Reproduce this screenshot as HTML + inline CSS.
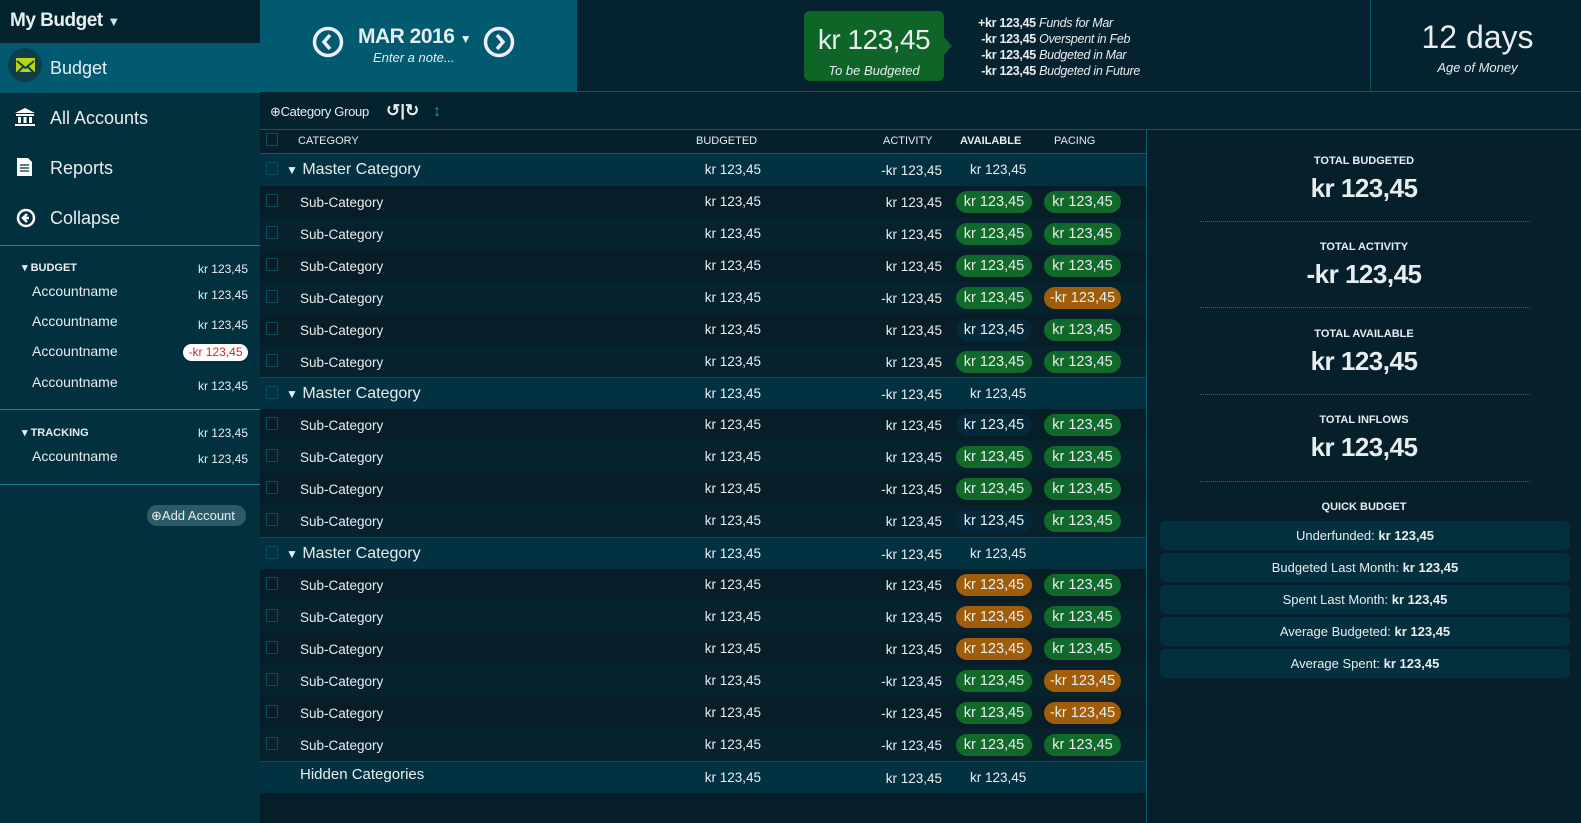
<!DOCTYPE html>
<html><head><meta charset="utf-8"><style>
*{box-sizing:border-box;margin:0;padding:0}
body{width:1581px;height:823px;overflow:hidden;background:#06202b;font-family:"Liberation Sans",sans-serif;color:#e8eef0;position:relative}
.abs{position:absolute}
#side{left:0;top:0;width:260px;height:823px;background:#02303f}
#side .top{height:43px;background:#02222d;font-weight:bold;font-size:19px;padding:10px 10px;letter-spacing:-0.5px}
.nav{height:50px;display:flex;align-items:center;font-size:18px;padding-left:50px;position:relative}
.nav.act{background:#015a70}
.hr{border-top:1px solid #2a7d95}
.acc{position:absolute;left:32px;font-size:14px}
.amt{position:absolute;right:12px;font-size:12px}
.row{position:absolute;left:260px;width:886px;height:32px;font-size:13.5px}
.row .cb{position:absolute;left:6px;top:8px;width:12px;height:13px;border:1px solid #0c4c60}
.row .nm{position:absolute;left:40px;top:9px}
.row .bu{position:absolute;right:385px;top:8px}
.row .ac{position:absolute;right:204px;top:9px}
.pill{position:absolute;top:5px;height:22px;border-radius:11px;font-size:14.5px;text-align:center;line-height:22px;width:76px}
.av{left:696px}.pa{left:784px;width:77px}
.g{background:#126a2a}.o{background:#a15d0a}.d{background:#05283a}
.m{background:#023241}.m .nm{font-size:16px;top:7px;left:40px}
.s1{background:#071d27}.s2{background:#06222d}
.m .avt{position:absolute;left:710px;top:8px}
.rp{position:absolute;left:1147px;width:434px;text-align:center}
.lab{font-size:11px;font-weight:bold}
.val{font-size:26px;font-weight:bold;letter-spacing:-0.5px}
.sep{position:absolute;left:1200px;width:330px;border-top:1px dotted #1f6a80}
.qb{position:absolute;left:1160px;width:410px;height:29px;background:#02303f;border-radius:5px;font-size:13px;text-align:center;line-height:29px}
</style></head><body>
<div id="side" class="abs">
 <div class="top">My Budget <span style="font-size:13px;color:#bfe6f2">&#9660;</span></div>
 <div class="nav act"><div class="abs" style="left:8px;top:5px;width:34px;height:34px;border-radius:17px;background:#103d4a"></div><div class="abs" style="left:16px;top:15px;width:19px;height:14px;background:#b9d613"><svg width="19" height="14"><path d="M1 1L9.5 8L18 1M1 13L7 7M18 13L12 7" stroke="#103d4a" stroke-width="2" fill="none"/></svg></div>Budget</div>
 <div class="nav"><svg class="abs" style="left:14px;top:14px" width="22" height="20"><path d="M11 1L1 6H21Z M2 7h18v2H2z M4 10h3v6H4zM9.5 10h3v6h-3zM15 10h3v6h-3z M1 17h20v2H1z" fill="#fff"/></svg>All Accounts</div>
 <div class="nav"><svg class="abs" style="left:16px;top:14px" width="17" height="20"><path d="M1 1h11l4 4v14H1z" fill="#fff"/><path d="M4 8h9M4 11h9M4 14h9" stroke="#02303f" stroke-width="1.3"/></svg>Reports</div>
 <div class="nav"><svg class="abs" style="left:16px;top:15px" width="20" height="20"><circle cx="10" cy="10" r="8" fill="none" stroke="#fff" stroke-width="2.5"/><path d="M11 6L7 10L11 14M7 10h6" stroke="#fff" stroke-width="2.5" fill="none"/></svg>Collapse</div>
 <div class="hr abs" style="top:245px;left:0;width:260px"></div>
 <div class="abs" style="top:261px;left:22px;font-size:11px;font-weight:bold">&#9662; BUDGET</div><div class="amt" style="top:262px">kr 123,45</div>
 <div class="acc" style="top:283px">Accountname</div><div class="amt" style="top:288px">kr 123,45</div>
 <div class="acc" style="top:313px">Accountname</div><div class="amt" style="top:318px">kr 123,45</div>
 <div class="acc" style="top:343px">Accountname</div><div class="abs" style="left:183px;top:344px;width:65px;height:17px;border-radius:9px;background:#fff;color:#d02828;font-size:12px;text-align:center;line-height:17px">-kr 123,45</div>
 <div class="acc" style="top:374px">Accountname</div><div class="amt" style="top:379px">kr 123,45</div>
 <div class="hr abs" style="top:409px;left:0;width:260px"></div>
 <div class="abs" style="top:426px;left:22px;font-size:11px;font-weight:bold">&#9662; TRACKING</div><div class="amt" style="top:426px">kr 123,45</div>
 <div class="acc" style="top:448px">Accountname</div><div class="amt" style="top:452px">kr 123,45</div>
 <div class="hr abs" style="top:484px;left:0;width:260px"></div>
 <div class="abs" style="left:147px;top:505px;width:99px;height:21px;border-radius:10px;background:#2c5a66;font-size:13px;line-height:21px;padding-left:4px">&#8853;Add Account</div>
</div>
<!-- header -->
<div class="abs" style="left:260px;top:0;width:317px;height:91px;background:#015a70"></div>
<svg class="abs" style="left:312px;top:26px" width="32" height="32"><circle cx="16" cy="16" r="13.5" fill="none" stroke="#eef" stroke-width="3.5"/><path d="M18 9L12 16L18 23" stroke="#eef" stroke-width="3.5" fill="none"/></svg>
<svg class="abs" style="left:483px;top:26px" width="32" height="32"><circle cx="16" cy="16" r="13.5" fill="none" stroke="#eef" stroke-width="3.5"/><path d="M14 9L20 16L14 23" stroke="#eef" stroke-width="3.5" fill="none"/></svg>
<div class="abs" style="left:358px;top:25px;font-size:21px;font-weight:bold;letter-spacing:-0.5px">MAR 2016 <span style="font-size:12px">&#9660;</span></div>
<div class="abs" style="left:373px;top:50px;font-size:13px;font-style:italic">Enter a note...</div>
<div class="abs" style="left:577px;top:0;width:1004px;height:91px;background:#04222f"></div>
<div class="abs" style="left:804px;top:11px;width:140px;height:70px;background:#0f6428;border-radius:6px"></div>
<div class="abs" style="left:942px;top:35px;width:0;height:0;border-top:11px solid transparent;border-bottom:11px solid transparent;border-left:10px solid #0f6428"></div>
<div class="abs" style="left:804px;top:24px;width:140px;text-align:center;font-size:28px;font-weight:300;letter-spacing:-0.5px">kr 123,45</div>
<div class="abs" style="left:804px;top:63px;width:140px;text-align:center;font-size:13px;font-style:italic">To be Budgeted</div>
<div class="abs" style="left:978px;top:15px;font-size:12.5px;line-height:16px;letter-spacing:-0.3px">
<b>+kr 123,45</b> <i>Funds for Mar</i><br>&nbsp;<b>-kr 123,45</b> <i>Overspent in Feb</i><br>&nbsp;<b>-kr 123,45</b> <i>Budgeted in Mar</i><br>&nbsp;<b>-kr 123,45</b> <i>Budgeted in Future</i></div>
<div class="abs" style="left:1370px;top:0;height:91px;border-left:1px solid #0d4f62"></div>
<div class="abs" style="left:1372px;top:19px;width:211px;text-align:center;font-size:32px;font-weight:300">12 days</div>
<div class="abs" style="left:1372px;top:60px;width:211px;text-align:center;font-size:13px;font-style:italic">Age of Money</div>
<div class="abs" style="left:260px;top:91px;width:1321px;border-top:1px solid #0b5a70"></div>
<!-- toolbar -->
<div class="abs" style="left:260px;top:92px;width:1321px;height:37px;background:#04222e"></div>
<div class="abs" style="left:270px;top:104px;font-size:13px;letter-spacing:-0.3px">&#8853;Category Group</div>
<div class="abs" style="left:386px;top:101px;font-size:17px;font-weight:bold">&#8634;|&#8635;</div>
<div class="abs" style="left:433px;top:103px;font-size:16px;color:#1a8fc0;font-weight:bold">&#8597;</div>
<div class="abs" style="left:260px;top:129px;width:1321px;border-top:1px solid #0b5a70"></div>
<!-- table header -->
<div class="abs" style="left:260px;top:130px;width:886px;height:23px;background:#05202b;font-size:11px">
<div class="abs" style="left:6px;top:3px;width:12px;height:13px;border:1px solid #0c4c60"></div>
<div class="abs" style="left:38px;top:5px">CATEGORY</div><div class="abs" style="left:436px;top:5px">BUDGETED</div><div class="abs" style="left:623px;top:5px">ACTIVITY</div><div class="abs" style="left:700px;top:5px;font-weight:bold">AVAILABLE</div><div class="abs" style="left:794px;top:5px">PACING</div></div>
<div class="abs" style="left:260px;top:153px;width:886px;border-top:1px solid #0b5a70"></div>
<div class="abs" style="left:1146px;top:129px;height:694px;border-left:1px solid #0b5a70"></div>

<div class="row m" style="top:154px"><div class="cb"></div><div class="nm"><span style="font-size:12px;margin-left:-14px">&#9660;</span> Master Category</div><div class="bu">kr 123,45</div><div class="ac">-kr 123,45</div><div class="avt">kr 123,45</div></div>
<div class="row s1" style="top:186px"><div class="cb"></div><div class="nm">Sub-Category</div><div class="bu">kr 123,45</div><div class="ac">kr 123,45</div><div class="pill av g">kr 123,45</div><div class="pill pa g">kr 123,45</div></div>
<div class="row s2" style="top:218px"><div class="cb"></div><div class="nm">Sub-Category</div><div class="bu">kr 123,45</div><div class="ac">kr 123,45</div><div class="pill av g">kr 123,45</div><div class="pill pa g">kr 123,45</div></div>
<div class="row s1" style="top:250px"><div class="cb"></div><div class="nm">Sub-Category</div><div class="bu">kr 123,45</div><div class="ac">kr 123,45</div><div class="pill av g">kr 123,45</div><div class="pill pa g">kr 123,45</div></div>
<div class="row s2" style="top:282px"><div class="cb"></div><div class="nm">Sub-Category</div><div class="bu">kr 123,45</div><div class="ac">-kr 123,45</div><div class="pill av g">kr 123,45</div><div class="pill pa o">-kr 123,45</div></div>
<div class="row s1" style="top:314px"><div class="cb"></div><div class="nm">Sub-Category</div><div class="bu">kr 123,45</div><div class="ac">kr 123,45</div><div class="pill av d">kr 123,45</div><div class="pill pa g">kr 123,45</div></div>
<div class="row s2" style="top:346px"><div class="cb"></div><div class="nm">Sub-Category</div><div class="bu">kr 123,45</div><div class="ac">kr 123,45</div><div class="pill av g">kr 123,45</div><div class="pill pa g">kr 123,45</div></div>
<div class="row m" style="top:377px;border-top:1px solid #0b4a5e"><div class="cb"></div><div class="nm"><span style="font-size:12px;margin-left:-14px">&#9660;</span> Master Category</div><div class="bu">kr 123,45</div><div class="ac">-kr 123,45</div><div class="avt">kr 123,45</div></div>
<div class="row s1" style="top:409px"><div class="cb"></div><div class="nm">Sub-Category</div><div class="bu">kr 123,45</div><div class="ac">kr 123,45</div><div class="pill av d">kr 123,45</div><div class="pill pa g">kr 123,45</div></div>
<div class="row s2" style="top:441px"><div class="cb"></div><div class="nm">Sub-Category</div><div class="bu">kr 123,45</div><div class="ac">kr 123,45</div><div class="pill av g">kr 123,45</div><div class="pill pa g">kr 123,45</div></div>
<div class="row s1" style="top:473px"><div class="cb"></div><div class="nm">Sub-Category</div><div class="bu">kr 123,45</div><div class="ac">-kr 123,45</div><div class="pill av g">kr 123,45</div><div class="pill pa g">kr 123,45</div></div>
<div class="row s2" style="top:505px"><div class="cb"></div><div class="nm">Sub-Category</div><div class="bu">kr 123,45</div><div class="ac">kr 123,45</div><div class="pill av d">kr 123,45</div><div class="pill pa g">kr 123,45</div></div>
<div class="row m" style="top:537px;border-top:1px solid #0b4a5e"><div class="cb"></div><div class="nm"><span style="font-size:12px;margin-left:-14px">&#9660;</span> Master Category</div><div class="bu">kr 123,45</div><div class="ac">-kr 123,45</div><div class="avt">kr 123,45</div></div>
<div class="row s1" style="top:569px"><div class="cb"></div><div class="nm">Sub-Category</div><div class="bu">kr 123,45</div><div class="ac">kr 123,45</div><div class="pill av o">kr 123,45</div><div class="pill pa g">kr 123,45</div></div>
<div class="row s2" style="top:601px"><div class="cb"></div><div class="nm">Sub-Category</div><div class="bu">kr 123,45</div><div class="ac">kr 123,45</div><div class="pill av o">kr 123,45</div><div class="pill pa g">kr 123,45</div></div>
<div class="row s1" style="top:633px"><div class="cb"></div><div class="nm">Sub-Category</div><div class="bu">kr 123,45</div><div class="ac">kr 123,45</div><div class="pill av o">kr 123,45</div><div class="pill pa g">kr 123,45</div></div>
<div class="row s2" style="top:665px"><div class="cb"></div><div class="nm">Sub-Category</div><div class="bu">kr 123,45</div><div class="ac">-kr 123,45</div><div class="pill av g">kr 123,45</div><div class="pill pa o">-kr 123,45</div></div>
<div class="row s1" style="top:697px"><div class="cb"></div><div class="nm">Sub-Category</div><div class="bu">kr 123,45</div><div class="ac">-kr 123,45</div><div class="pill av g">kr 123,45</div><div class="pill pa o">-kr 123,45</div></div>
<div class="row s2" style="top:729px"><div class="cb"></div><div class="nm">Sub-Category</div><div class="bu">kr 123,45</div><div class="ac">-kr 123,45</div><div class="pill av g">kr 123,45</div><div class="pill pa g">kr 123,45</div></div>
<div class="row m" style="top:761px;border-top:1px solid #0b4a5e"><div class="nm" style="font-size:15px;top:4px">Hidden Categories</div><div class="bu">kr 123,45</div><div class="ac">kr 123,45</div><div class="avt">kr 123,45</div></div>
<div class="abs" style="left:260px;top:793px;width:886px;height:30px;background:#061e28"></div>

<!-- right panel -->
<div class="rp lab" style="top:155px">TOTAL BUDGETED</div><div class="rp val" style="top:173px">kr 123,45</div>
<div class="sep" style="top:221px"></div>
<div class="rp lab" style="top:241px">TOTAL ACTIVITY</div><div class="rp val" style="top:259px">-kr 123,45</div>
<div class="sep" style="top:307px"></div>
<div class="rp lab" style="top:328px">TOTAL AVAILABLE</div><div class="rp val" style="top:346px">kr 123,45</div>
<div class="sep" style="top:394px"></div>
<div class="rp lab" style="top:414px">TOTAL INFLOWS</div><div class="rp val" style="top:432px">kr 123,45</div>
<div class="sep" style="top:481px"></div>
<div class="rp lab" style="top:501px">QUICK BUDGET</div>
<div class="qb" style="top:521px">Underfunded: <b>kr 123,45</b></div>
<div class="qb" style="top:553px">Budgeted Last Month: <b>kr 123,45</b></div>
<div class="qb" style="top:585px">Spent Last Month: <b>kr 123,45</b></div>
<div class="qb" style="top:617px">Average Budgeted: <b>kr 123,45</b></div>
<div class="qb" style="top:649px">Average Spent: <b>kr 123,45</b></div>
</body></html>
